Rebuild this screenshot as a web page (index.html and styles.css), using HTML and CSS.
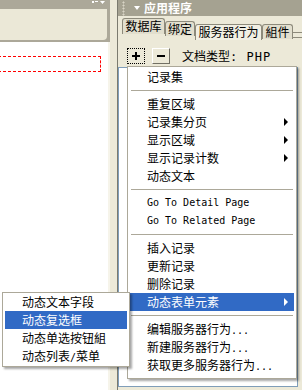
FILE: index.html
```html
<!DOCTYPE html>
<html lang="zh-CN">
<head>
<meta charset="UTF-8" />
<title>应用程序 - 服务器行为</title>
<link rel="stylesheet" href="styles.css">
</head>
<body>
<div class="app">
    <section class="doc">
        <div class="doc-top">
            <div class="doc-strip">
                <svg width="14" height="6" viewBox="0 0 14 6">
                    <rect x="0" y="1" width="2" height="2" fill="#fff"/>
                    <rect x="3" y="1" width="3" height="1" fill="#fff"/>
                    <polygon points="8,1 13,1 10.5,4" fill="#fff"/>
                </svg>
            </div>
            <div class="doc-bar"></div>
        </div>
        <div class="doc-body">
            <div class="region"></div>
        </div>
    </section>
    <div class="splitter"></div>
    <section class="panel">
        <div class="panel-head">
            <span class="grip"></span>
            <span class="caret"></span>
            <span class="panel-title">应用程序</span>
        </div>
        <div class="tabs">
            <div class="tab tab-db">数据库</div>
            <div class="tab tab-bind">绑定</div>
            <div class="tab tab-sb active">服务器行为</div>
            <div class="tab tab-comp">組件</div>
            <div class="tab-rest"></div>
        </div>
        <div class="toolbar">
            <button class="tool focus"><span class="plus"></span></button>
            <button class="tool"><span class="minus"></span></button>
            <span class="doctype">文档类型<span class="mono">: PHP</span></span>
        </div>
        <div class="listbox"></div>
    </section>
</div>

<div class="menu main-menu">
    <div class="item">记录集</div>
    <div class="sep"></div>
    <div class="item">重复区域</div>
    <div class="item">记录集分页<span class="arrow"></span></div>
    <div class="item">显示区域<span class="arrow"></span></div>
    <div class="item">显示记录计数<span class="arrow"></span></div>
    <div class="item">动态文本</div>
    <div class="sep"></div>
    <div class="item latin">Go To Detail Page</div>
    <div class="item latin">Go To Related Page</div>
    <div class="sep"></div>
    <div class="item">插入记录</div>
    <div class="item">更新记录</div>
    <div class="item">删除记录</div>
    <div class="item selected">动态表单元素<span class="arrow"></span></div>
    <div class="sep"></div>
    <div class="item">编辑服务器行为<span class="mono">...</span></div>
    <div class="item">新建服务器行为<span class="mono">...</span></div>
    <div class="item">获取更多服务器行为<span class="mono">...</span></div>
</div>

<div class="menu sub-menu">
    <div class="item">动态文本字段</div>
    <div class="item selected">动态复选框</div>
    <div class="item">动态单选按钮組</div>
    <div class="item">动态列表<span class="mono">/</span>菜单</div>
</div>
</body>
</html>
```

FILE: styles.css
```css
body {
    margin: 0;
    width: 302px;
    height: 390px;
    overflow: hidden;
    position: relative;
    background-color: #ece9d8;
    font-family: 'Noto Sans CJK SC', sans-serif;
    font-size: 12px;
    color: #000;
}
.app {
    display: flex;
    height: 390px;
}
.doc {
    width: 110px;
    display: flex;
    flex-direction: column;
}
.doc-top {
    height: 42px;
    background-color: #aca899;
    padding-right: 3px;
    padding-bottom: 2px;
    box-sizing: border-box;
    display: flex;
    flex-direction: column;
}
.doc-strip {
    height: 9px;
    display: flex;
    justify-content: flex-end;
    align-items: flex-start;
    padding-right: 1px;
}
.doc-bar {
    flex: 1;
    background-color: #ebe8d7;
    border-bottom-right-radius: 4px;
}
.doc-body {
    flex: 1;
    background-color: #fff;
    border-right: 2px solid #f6f4ea;
    padding-top: 14px;
}
.region {
    margin-left: -2px;
    width: 101px;
    height: 14px;
    border: 1px dashed #ff0000;
}
.splitter {
    width: 7px;
    background-color: #ece9d8;
}
.panel {
    flex: 1;
    min-width: 0;
    border-left: 1px solid #7b7a6e;
    display: flex;
    flex-direction: column;
}
.panel-head {
    height: 16px;
    background-color: #a5a291;
    color: #fff;
    display: flex;
    align-items: center;
    padding-left: 4px;
}
.grip {
    width: 3px;
    height: 15px;
    background-image: radial-gradient(#d8d5c6 45%, transparent 50%);
    background-size: 3px 3px;
}
.caret {
    margin-left: 9px;
    width: 0;
    height: 0;
    border-left: 3px solid transparent;
    border-right: 3px solid transparent;
    border-top: 4px solid #fff;
}
.panel-title {
    margin-left: 4px;
    font-weight: 700;
    line-height: 14px;
}
.tabs {
    height: 24px;
    display: flex;
    align-items: flex-start;
    padding-left: 4px;
}
.tab {
    flex: none;
    box-sizing: border-box;
    border: 1px solid #8d8a7b;
    border-bottom: none;
    border-radius: 3px 3px 0 0;
    background-color: #e2dfce;
    text-align: center;
    line-height: 14px;
    font-size: 12px;
}
.tab-db { margin-top: 2px; width: 43px; height: 16px; }
.tab-bind { margin-top: 5px; width: 30px; height: 15px; }
.tab-sb { margin-top: 8px; width: 67px; height: 16px; }
.tab-comp { margin-top: 8px; width: 31px; height: 15px; }
.tab.active {
    background-color: #f1efe3;
}
.tab-rest {
    flex: 1;
    margin-top: 16px;
    height: 4px;
    border-top: 1px solid #8d8a7b;
    border-bottom: 1px solid #8d8a7b;
}
.toolbar {
    height: 27px;
    box-sizing: border-box;
    padding: 8px 0 0 9px;
    display: flex;
    align-items: flex-start;
}
.tool {
    width: 18px;
    height: 16px;
    margin: 0 7px 0 0;
    padding: 0;
    box-sizing: border-box;
    background-color: #ece9d8;
    border: 1px solid;
    border-color: #fff #716f64 #716f64 #fff;
    display: flex;
    align-items: center;
    justify-content: center;
}
.tool.focus {
    border: 1px dotted #000;
}
.plus {
    width: 8px;
    height: 8px;
    background:
        linear-gradient(#000, #000) center / 8px 2px no-repeat,
        linear-gradient(#000, #000) center / 2px 8px no-repeat;
}
.minus {
    width: 8px;
    height: 2px;
    background-color: #000;
}
.doctype {
    margin-left: 5px;
    line-height: 15px;
}
.mono {
    font-family: 'DejaVu Sans Mono', monospace;
    font-size: 10px;
}
.doctype .mono {
    font-size: 12px;
    letter-spacing: 1px;
}
.listbox {
    width: 180px;
    height: 320px;
    box-sizing: border-box;
    border: 1px solid #7f9db9;
    background-color: #fff;
}
.menu {
    position: absolute;
    background-color: #fff;
    border: 1px solid #aca899;
    box-shadow: 2px 2px 2px rgba(0, 0, 0, 0.35);
}
.main-menu {
    left: 127px;
    top: 66px;
    width: 168px;
    padding: 1px 0 4px 0;
}
.sub-menu {
    left: 2px;
    top: 292px;
    width: 126px;
    padding: 0 0 1px 0;
}
.item {
    height: 18px;
    line-height: 18px;
    padding-left: 19px;
    margin-right: 2px;
    position: relative;
    white-space: nowrap;
}
.sub-menu .item {
    margin-left: 2px;
    padding-left: 17px;
}
.item.latin {
    font-family: 'DejaVu Sans Mono', monospace;
    font-size: 10px;
}
.item.selected {
    background-color: #316ac5;
    color: #fff;
}
.arrow {
    position: absolute;
    right: 6px;
    top: 5px;
    width: 0;
    height: 0;
    border-top: 4px solid transparent;
    border-bottom: 4px solid transparent;
    border-left: 4px solid #000;
}
.selected .arrow {
    border-left-color: #fff;
}
.sep {
    height: 9px;
    position: relative;
}
.sep::after {
    content: '';
    position: absolute;
    left: 3px;
    right: 3px;
    top: 4px;
    border-top: 1px solid #aca899;
}
```
